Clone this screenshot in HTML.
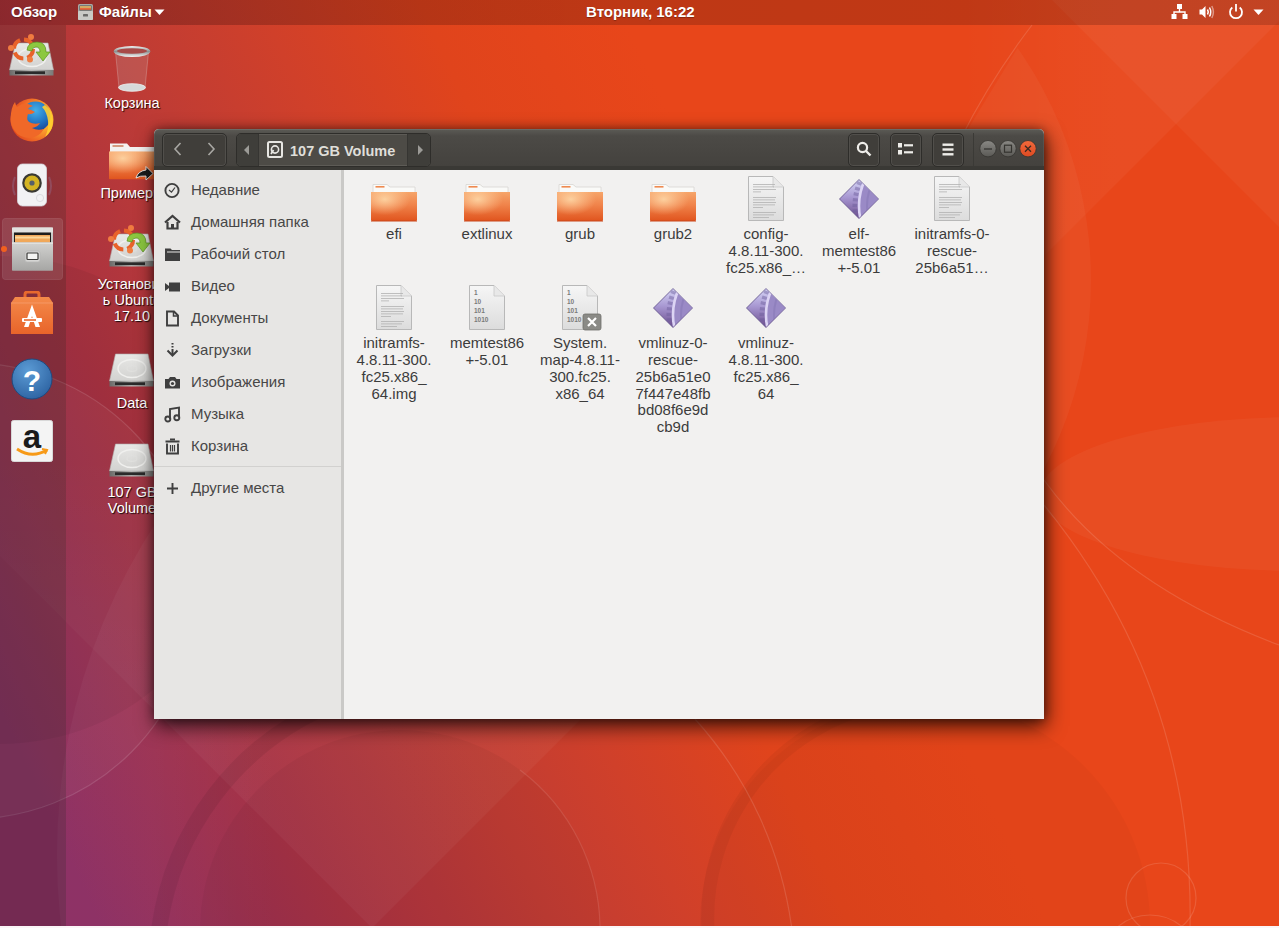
<!DOCTYPE html>
<html><head><meta charset="utf-8">
<style>
*{margin:0;padding:0;box-sizing:border-box}
html,body{width:1279px;height:928px;overflow:hidden;background:#fbf6f8}
body{position:relative;font-family:"Liberation Sans",sans-serif}
.abs{position:absolute}
#bg{position:absolute;left:0;top:0;width:1279px;height:926px;overflow:hidden}
#topbar{position:absolute;left:0;top:0;width:1279px;height:25px;background:linear-gradient(90deg,rgba(30,0,0,0.26),rgba(30,0,0,0.21) 40%,rgba(30,0,0,0.19));color:#fff;font-weight:bold;font-size:15px}
#topbar .t{position:absolute;top:3px;white-space:nowrap;text-shadow:0 1px 1px rgba(0,0,0,0.3)}
#dock{position:absolute;left:0;top:25px;width:66px;height:901px;background:rgba(30,40,30,0.2)}
.dicon{position:absolute}
.dlabel{position:absolute;width:90px;text-align:center;color:#fff;font-size:14.5px;line-height:16px;text-shadow:1px 1px 1px rgba(0,0,0,0.85)}
#win{position:absolute;left:154px;top:129px;width:890px;height:590px;background:#f2f1f0;border-radius:5px 5px 0 0;box-shadow:2px 7px 20px rgba(0,0,0,0.75),0 0 10px rgba(0,0,0,0.35)}
#hdr{position:absolute;left:0;top:0;width:890px;height:41px;background:linear-gradient(#5c5b56,#4c4a46 7px,#44423e);border-radius:5px 5px 0 0;border-bottom:4px solid #3a3935;box-shadow:inset 0 1px 0 rgba(255,255,255,0.1),inset 1px 0 0 rgba(255,255,255,0.06),inset -1px 0 0 rgba(255,255,255,0.06)}
.hbtn{position:absolute;top:3.5px;height:34px;border:1px solid #2e2d2a;border-radius:5px;background:#403e3a;box-shadow:inset 0 0 0 1px rgba(255,255,255,0.09)}
#side{position:absolute;left:0;top:41px;width:187px;height:549px;background:#e7e6e4}
#divider{position:absolute;left:187px;top:41px;width:3px;height:549px;background:#cac9c7}
.si{position:absolute;left:0;width:187px;height:32px}
.si .ic{position:absolute;left:10px;top:8px;width:17px;height:17px}
.si .tx{position:absolute;left:37px;top:7px;font-size:15px;color:#474747;white-space:nowrap}
.item{position:absolute;width:93px;text-align:center}
.item .lab{position:absolute;left:0;width:93px;font-size:15px;line-height:16.7px;color:#3c3c3c;text-align:center;white-space:nowrap}
</style></head><body>
<div id="bg">
<svg width="1279" height="926" style="position:absolute;left:0;top:0">
<defs>
<linearGradient id="base" gradientUnits="userSpaceOnUse" x1="-272" y1="127" x2="525" y2="-245">
<stop offset="0" stop-color="#8a2b60"/>
<stop offset="0.257" stop-color="#a83242"/>
<stop offset="0.4625" stop-color="#c03c34"/>
<stop offset="0.607" stop-color="#d0402a"/>
<stop offset="0.772" stop-color="#e0441c"/>
<stop offset="0.977" stop-color="#e8461a"/>
</linearGradient>
</defs>
<rect width="1279" height="926" fill="url(#base)"/>
<g>
<defs>
 <linearGradient id="fadeV" gradientUnits="userSpaceOnUse" x1="0" y1="450" x2="0" y2="720"><stop offset="0" stop-color="#fff" stop-opacity="0"/><stop offset="1" stop-color="#fff" stop-opacity="0.04"/></linearGradient>
 <linearGradient id="fadeH" gradientUnits="userSpaceOnUse" x1="960" y1="0" x2="1120" y2="0"><stop offset="0" stop-color="#fff" stop-opacity="0"/><stop offset="1" stop-color="#fff" stop-opacity="0.04"/></linearGradient>
 </defs>
 <polygon points="372,928 -1000,-444 300,-1744 1672,-372" fill="url(#fadeV)"/>
 <polygon points="372,928 -1000,-444 300,-1744 1672,-372" fill="url(#fadeH)"/>
 <polygon points="1052,0 1279,227 1279,0" fill="#fff" fill-opacity="0.04"/>
 <clipPath id="s1clip"><polygon points="1047,0 1400,0 1400,926 480,926"/></clipPath>
 <circle cx="688" cy="280" r="403" fill="#fff" fill-opacity="0.04" clip-path="url(#s1clip)"/>
 <ellipse cx="1300" cy="494" rx="260" ry="77" fill="#fff" fill-opacity="0.04"/>
 <circle cx="925" cy="925" r="225" fill="#000" fill-opacity="0.025"/>
 <path d="M708 930 A218 218 0 0 1 880 705" fill="none" stroke="#000" stroke-opacity="0.045" stroke-width="13"/>
 <path d="M159 930 A285 285 0 0 1 330 705" fill="none" stroke="#000" stroke-opacity="0.07" stroke-width="16"/>
 <circle cx="400" cy="930" r="200" fill="#000" fill-opacity="0.04"/>
 <path d="M520 770 A200 200 0 0 1 600 930" fill="none" stroke="#fff" stroke-opacity="0.1" stroke-width="1.2"/>
 <circle cx="-30" cy="591" r="228" fill="#fff" fill-opacity="0.035"/>
 <circle cx="0" cy="500" r="244" fill="#000" fill-opacity="0.05"/>
 <defs><linearGradient id="fadeL" gradientUnits="userSpaceOnUse" x1="150" y1="0" x2="280" y2="0"><stop offset="0" stop-color="#fff" stop-opacity="0.035"/><stop offset="1" stop-color="#fff" stop-opacity="0"/></linearGradient></defs>
 <circle cx="665" cy="855" r="608" fill="url(#fadeL)"/>
 <g fill="none" stroke="#fff" stroke-opacity="0.13" stroke-width="1.2">
  <circle cx="-30" cy="591" r="228"/>
  <path d="M695 719 A389 389 0 0 1 792 930"/>
  <path d="M1032 25 Q990 80 960 140"/>
  <path d="M1044 480 Q1120 585 1279 645"/>
  <path d="M1044 505 Q1195 690 1190 930"/>
  <circle cx="1161" cy="898" r="35"/>
  <circle cx="1150" cy="965" r="50"/>
 </g>
</g>
</svg>
</div>
<div id="topbar">
<div class="t" style="left:11px">Обзор</div>
<svg class="abs" style="left:77px;top:3px" width="17" height="18" viewBox="0 0 17 18">
 <rect x="1" y="1" width="15" height="16" rx="1.5" fill="#a9aaa6"/>
 <rect x="2.5" y="2.5" width="12" height="5" fill="#4a4a48"/>
 <rect x="3" y="3.2" width="11" height="1.6" fill="#f5c26a"/>
 <rect x="3" y="5" width="11" height="1.8" fill="#e86a3c"/>
 <rect x="1" y="8" width="15" height="9" rx="1" fill="#c9cac6"/>
 <rect x="6" y="11" width="5" height="2.6" rx="0.6" fill="#6a6a68"/>
</svg>
<div class="t" style="left:99px">Файлы</div>
<svg class="abs" style="left:154px;top:9px" width="11" height="7"><path d="M0.5 0.5 L10.5 0.5 L5.5 6 Z" fill="#fff"/></svg>
<div class="t" style="left:586px">Вторник, 16:22</div>
<svg class="abs" style="left:1171px;top:4px" width="17" height="16" viewBox="0 0 17 16">
 <rect x="6" y="0" width="5" height="5" fill="#fff"/>
 <path d="M8.5 5 V8 M3 11 V8 H14 V11" stroke="#fff" stroke-width="1.4" fill="none"/>
 <rect x="0.5" y="10" width="5" height="5" fill="#fff"/>
 <rect x="11.5" y="10" width="5" height="5" fill="#fff"/>
</svg>
<svg class="abs" style="left:1199px;top:4px" width="16" height="16" viewBox="0 0 16 16">
 <path d="M0.5 5.5 H3 L6.5 2 V14 L3 10.5 H0.5 Z" fill="#fff"/>
 <path d="M8.5 5.5 Q10 8 8.5 10.5" stroke="#fff" stroke-width="1.5" fill="none"/>
 <path d="M10.5 3.5 Q13 8 10.5 12.5" stroke="#fff" stroke-width="1.5" fill="none"/>
 <path d="M12.8 2 Q16 8 12.8 14" stroke="rgba(255,255,255,0.45)" stroke-width="1.5" fill="none"/>
</svg>
<svg class="abs" style="left:1228px;top:3px" width="16" height="17" viewBox="0 0 16 17">
 <path d="M4.3 4.5 A6 6 0 1 0 11.7 4.5" stroke="#fff" stroke-width="1.8" fill="none"/>
 <path d="M8 1 V8.5" stroke="#fff" stroke-width="1.8"/>
</svg>
<svg class="abs" style="left:1253px;top:9px" width="11" height="7"><path d="M0.5 0.5 L10.5 0.5 L5.5 6 Z" fill="#fff"/></svg>

</div>
<div id="dock">
<svg width="0" height="0" style="position:absolute"><defs><linearGradient id="drvtop" x1="0" y1="0" x2="0" y2="1"><stop offset="0" stop-color="#e8e8e6"/><stop offset="1" stop-color="#d2d2d0"/></linearGradient>
<linearGradient id="drvfront" x1="0" y1="0" x2="1" y2="0"><stop offset="0" stop-color="#6a6a68"/><stop offset="0.5" stop-color="#b8b8b6"/><stop offset="1" stop-color="#7a7a78"/></linearGradient>
<radialGradient id="ffblue" cx="0.55" cy="0.4" r="0.6"><stop offset="0" stop-color="#3a9ad8"/><stop offset="1" stop-color="#1d3f8c"/></radialGradient>
<linearGradient id="ffor" x1="0" y1="0" x2="1" y2="1"><stop offset="0" stop-color="#ffcf3a"/><stop offset="0.5" stop-color="#f2702a"/><stop offset="1" stop-color="#d43a22"/></linearGradient>
<linearGradient id="cab" x1="0" y1="0" x2="0" y2="1"><stop offset="0" stop-color="#d6d6d4"/><stop offset="1" stop-color="#9c9d9a"/></linearGradient>
<linearGradient id="bag" x1="0" y1="0" x2="0" y2="1"><stop offset="0" stop-color="#f48a4a"/><stop offset="1" stop-color="#e8642a"/></linearGradient>
<radialGradient id="help" cx="0.4" cy="0.3" r="0.8"><stop offset="0" stop-color="#5b9bd5"/><stop offset="1" stop-color="#2a5f9e"/></radialGradient>
</defs></svg>
<!-- install ubuntu -->
<svg class="dicon" style="left:8px;top:17px;overflow:visible" width="48" height="36" viewBox="0 0 48 36">
 <path d="M7.5 1 H40 L45.5 28 H1.5 Z" fill="url(#drvtop)" stroke="#b0b0ae" stroke-width="0.6"/>
 <ellipse cx="24" cy="15.5" rx="14" ry="9" fill="none" stroke="#f0f0ee" stroke-width="1.4"/>
 <ellipse cx="24" cy="15.5" rx="5" ry="2.8" fill="none" stroke="#e0e0de" stroke-width="1.2"/>
 <rect x="1.5" y="28" width="44" height="5.5" fill="url(#drvfront)"/>
 <rect x="7" y="29.3" width="30" height="2.8" fill="#2a2a2a"/>
 <g transform="translate(0,0)">
 <circle cx="15.5" cy="7" r="9.5" fill="none" stroke="#e8622a" stroke-width="4" stroke-dasharray="11 4"/>
 <circle cx="3" cy="6" r="3" fill="#f07c40"/><circle cx="23" cy="-5" r="3" fill="#f07c40"/><circle cx="22" cy="17.5" r="3" fill="#f07c40"/>
 <path d="M19 8 Q20 0 29 0 Q38 0 38 10 L42 10 L35 19 L28 10 L32 10 Q32 5 28 5 Q24 5 24 9 Z" fill="#8cc840" stroke="#5a9020" stroke-width="0.7"/>
</g>
</svg>
<!-- firefox -->
<svg class="dicon" style="left:9px;top:72px" width="46" height="46" viewBox="0 0 46 46">
 <defs>
  <radialGradient id="ffo2" cx="0.75" cy="0.45" r="0.75"><stop offset="0" stop-color="#ffe040"/><stop offset="0.35" stop-color="#fba42c"/><stop offset="0.7" stop-color="#f06a26"/><stop offset="1" stop-color="#e0461c"/></radialGradient>
  <radialGradient id="ffb2" cx="0.5" cy="0.3" r="0.75"><stop offset="0" stop-color="#44b0e8"/><stop offset="0.6" stop-color="#2070c0"/><stop offset="1" stop-color="#1a3e90"/></radialGradient>
 </defs>
 <circle cx="23" cy="23" r="21.5" fill="url(#ffo2)"/>
 <circle cx="26.5" cy="19.5" r="15" fill="url(#ffb2)"/>
 <path d="M1.5 22 Q2 10 6 5 Q7 9 8 10 Q13 6 19 7 Q22 8 24 9 Q20 10 19 12 Q23 13 26 15 Q22 18 19 17 Q17 22 20 25 Q25 28 31 26 Q29 30 23 31 Q28 34 35 32 Q30 40 22 41 Q10 41 5 33 Q1.5 28 1.5 22 Z" fill="#f06828"/>
 <path d="M36 8 Q44 14 44 24 Q44 34 36 40 Q40 32 39 24 Q38 15 33 10 Z" fill="#ffcf30" opacity="0.9"/>
</svg>
<!-- rhythmbox -->
<svg class="dicon" style="left:8px;top:138px" width="48" height="46" viewBox="0 0 48 46">
 <path d="M7 14 Q3 23 7 32 M41 14 Q45 23 41 32" stroke="rgba(150,150,200,0.25)" stroke-width="2" fill="none"/>
 <rect x="9.5" y="1" width="29" height="42" rx="5" fill="#f2f2f4" stroke="#d4d4da" stroke-width="0.8"/>
 <circle cx="24" cy="20" r="9.8" fill="#3a3a34"/>
 <circle cx="24" cy="20" r="7.6" fill="#d4b422"/>
 <circle cx="24" cy="20" r="2.6" fill="#56606a"/>
 <circle cx="32" cy="35" r="3.6" fill="none" stroke="#dcdce0" stroke-width="1"/>
</svg>
<!-- files highlight -->
<div class="abs" style="left:2px;top:193px;width:61px;height:62px;border-radius:4px;background:rgba(255,255,255,0.1);box-shadow:inset 0 0 0 1px rgba(255,255,255,0.05)"></div>
<div class="abs" style="left:1px;top:221px;width:6px;height:6px;border-radius:3px;background:#f2601e"></div>
<svg class="dicon" style="left:11px;top:202px" width="43" height="44" viewBox="0 0 43 44">
 <defs><linearGradient id="cab2" x1="0" y1="0" x2="0" y2="1"><stop offset="0" stop-color="#d2d2d0"/><stop offset="1" stop-color="#a6a6a4"/></linearGradient></defs>
 <rect x="1" y="0.5" width="41" height="43" rx="1.5" fill="url(#cab2)"/>
 <rect x="1" y="0.5" width="41" height="5" fill="#e2e2e0"/>
 <rect x="3" y="5.5" width="37" height="10" fill="#1e1e1c"/>
 <rect x="4" y="8" width="35" height="7.5" fill="#f0a85a"/>
 <rect x="4" y="9.5" width="35" height="2" fill="#fbd79a"/>
 <rect x="1" y="15.5" width="41" height="28" fill="url(#cab2)"/>
 <rect x="1" y="15.5" width="41" height="1.2" fill="#e8e8e6"/>
 <rect x="14" y="24" width="15" height="11" rx="2" fill="#d6d6d4" stroke="#b8b8b6" stroke-width="0.8"/>
 <rect x="16" y="26" width="11" height="6.5" rx="0.8" fill="#f4f4f2" stroke="#3a3a38" stroke-width="1.2"/>
</svg>
<!-- software -->
<svg class="dicon" style="left:10px;top:266px" width="44" height="44" viewBox="0 0 44 44">
 <path d="M15 8 V3.5 Q15 1 17.5 1 H26.5 Q29 1 29 3.5 V8" stroke="#e8692e" stroke-width="3" fill="none"/>
 <path d="M5 6 H39 L43 12 V43 H1 V12 Z" fill="url(#bag)"/>
 <path d="M1 12 H43" stroke="#f6a070" stroke-width="0.8"/>
 <path d="M22 13.5 L14 36 H18.5 L22 25 L25.5 36 H30 Z" fill="#fff"/>
 <rect x="12" y="27" width="20" height="4" rx="1" fill="#fff"/>
 <rect x="14" y="28.2" width="12" height="1.6" fill="#e8692e"/>
</svg>
<!-- help -->
<svg class="dicon" style="left:11px;top:333px" width="42" height="42" viewBox="0 0 42 42">
 <circle cx="21" cy="21" r="20" fill="url(#help)" stroke="#1f4a80" stroke-width="1"/>
 <text x="21" y="33" text-anchor="middle" font-family="Liberation Sans" font-weight="bold" font-size="30" fill="#fff">?</text>
</svg>
<!-- amazon -->
<svg class="dicon" style="left:11px;top:395px" width="42" height="42" viewBox="0 0 42 42">
 <rect x="0.5" y="0.5" width="41" height="41" rx="2" fill="#f4f4f4" stroke="#d8d8d8"/>
 <text x="21" y="28" text-anchor="middle" font-family="Liberation Sans" font-weight="bold" font-size="33" fill="#1a1a1a">a</text>
 <path d="M6 29 Q21 39 36 30" stroke="#f79a18" stroke-width="2.8" fill="none"/>
 <path d="M31 29 L36 30 L34 34" stroke="#f79a18" stroke-width="2" fill="none"/>
</svg>

</div>
<!-- trash -->
<svg class="dicon" style="left:112px;top:45px" width="40" height="48" viewBox="0 0 40 48">
 <defs><linearGradient id="rim" x1="0" y1="0" x2="0" y2="1"><stop offset="0" stop-color="#f0f4f4"/><stop offset="0.5" stop-color="#8c9090"/><stop offset="1" stop-color="#f4f6f6"/></linearGradient></defs>
 <path d="M3.5 7 L7 43 Q20 47 33 43 L36.5 7 Z" fill="rgba(190,170,170,0.22)" stroke="rgba(230,220,220,0.35)" stroke-width="0.8"/>
 <ellipse cx="20" cy="42.5" rx="13.5" ry="3.8" fill="#d6dada" stroke="#eef0f0" stroke-width="0.8"/>
 <ellipse cx="20" cy="6.5" rx="18.3" ry="5.5" fill="url(#rim)"/>
 <ellipse cx="20" cy="6" rx="15" ry="2.8" fill="#a84a48"/>
</svg>
<div class="dlabel" style="left:87px;top:95px">Корзина</div>
<!-- examples folder -->
<svg class="dicon" style="left:109px;top:143px" width="46" height="40" viewBox="0 0 46 40">
 <path d="M1 0.5 H18 L21 4 H46 V10 H1 Z" fill="#f4f2f0"/>
 <rect x="3.5" y="2" width="11" height="2" fill="#d49a80"/>
 <path d="M0 8.4 H46 V35.5 Q46 36.3 45 36.3 H1 Q0 36.3 0 35.5 Z" fill="url(#fld)"/>
 <path d="M0 8.4 H46 V36.3 H0 Z" fill="url(#fldhl)"/>
 <path d="M27 35 Q29 28 37 27 V23.5 L44 30.5 L37 37 V33 Q31 32.5 27 35 Z" fill="#1c1c1c" stroke="#f0f0f0" stroke-width="0.9"/>
</svg>
<div class="dlabel" style="left:87px;top:185px">Примеры</div>
<svg class="dicon" style="left:108px;top:233px;overflow:visible" width="48" height="36" viewBox="0 0 48 36">
 <path d="M7.5 1 H40 L45.5 28 H1.5 Z" fill="url(#drvtop)" stroke="#b0b0ae" stroke-width="0.6"/>
 <ellipse cx="24" cy="15.5" rx="14" ry="9" fill="none" stroke="#f0f0ee" stroke-width="1.4"/>
 <ellipse cx="24" cy="15.5" rx="5" ry="2.8" fill="none" stroke="#e0e0de" stroke-width="1.2"/>
 <rect x="1.5" y="28" width="44" height="5.5" fill="url(#drvfront)"/>
 <rect x="7" y="29.3" width="30" height="2.8" fill="#2a2a2a"/>
 <g transform="translate(0,0)">
 <circle cx="15.5" cy="7" r="9.5" fill="none" stroke="#e8622a" stroke-width="4" stroke-dasharray="11 4"/>
 <circle cx="3" cy="6" r="3" fill="#f07c40"/><circle cx="23" cy="-5" r="3" fill="#f07c40"/><circle cx="22" cy="17.5" r="3" fill="#f07c40"/>
 <path d="M19 8 Q20 0 29 0 Q38 0 38 10 L42 10 L35 19 L28 10 L32 10 Q32 5 28 5 Q24 5 24 9 Z" fill="#8cc840" stroke="#5a9020" stroke-width="0.7"/>
</g>
</svg>
<div class="dlabel" style="left:87px;top:276px">Установит<br>ь Ubuntu<br>17.10</div>
<svg class="dicon" style="left:108px;top:353px;overflow:visible" width="48" height="36" viewBox="0 0 48 36">
 <path d="M7.5 1 H40 L45.5 28 H1.5 Z" fill="url(#drvtop)" stroke="#b0b0ae" stroke-width="0.6"/>
 <ellipse cx="24" cy="15.5" rx="14" ry="9" fill="none" stroke="#f0f0ee" stroke-width="1.4"/>
 <ellipse cx="24" cy="15.5" rx="5" ry="2.8" fill="none" stroke="#e0e0de" stroke-width="1.2"/>
 <rect x="1.5" y="28" width="44" height="5.5" fill="url(#drvfront)"/>
 <rect x="7" y="29.3" width="30" height="2.8" fill="#2a2a2a"/>
 
</svg>
<div class="dlabel" style="left:87px;top:395px">Data</div>
<svg class="dicon" style="left:108px;top:443px;overflow:visible" width="48" height="36" viewBox="0 0 48 36">
 <path d="M7.5 1 H40 L45.5 28 H1.5 Z" fill="url(#drvtop)" stroke="#b0b0ae" stroke-width="0.6"/>
 <ellipse cx="24" cy="15.5" rx="14" ry="9" fill="none" stroke="#f0f0ee" stroke-width="1.4"/>
 <ellipse cx="24" cy="15.5" rx="5" ry="2.8" fill="none" stroke="#e0e0de" stroke-width="1.2"/>
 <rect x="1.5" y="28" width="44" height="5.5" fill="url(#drvfront)"/>
 <rect x="7" y="29.3" width="30" height="2.8" fill="#2a2a2a"/>
 
</svg>
<div class="dlabel" style="left:87px;top:484px">107 GB<br>Volume</div>

<div id="win">
 <div id="hdr">
 <div class="hbtn" style="left:8px;width:65px"></div>
<svg class="abs" style="left:19px;top:13px" width="10" height="14"><path d="M7.5 1 L2 7 L7.5 13" stroke="#a8a7a3" stroke-width="1.6" fill="none"/></svg>
<svg class="abs" style="left:52px;top:13px" width="10" height="14"><path d="M2.5 1 L8 7 L2.5 13" stroke="#a8a7a3" stroke-width="1.6" fill="none"/></svg>
<div class="hbtn" style="left:82px;width:195px;background:#4d4b46"></div>
<div class="abs" style="left:83px;top:4.5px;width:22px;height:32px;background:#3f3e3a;border-radius:4px 0 0 4px;border-right:1px solid #363532"></div>
<div class="abs" style="left:253px;top:4.5px;width:23px;height:32px;background:#3f3e3a;border-radius:0 4px 4px 0;border-left:1px solid #363532"></div>
<svg class="abs" style="left:89px;top:15px" width="8" height="12"><path d="M6 1 L1 6 L6 11 Z" fill="#9c9b97"/></svg>
<svg class="abs" style="left:263px;top:15px" width="8" height="12"><path d="M1 1 L6 6 L1 11 Z" fill="#9c9b97"/></svg>
<svg class="abs" style="left:113px;top:12px" width="16" height="17" viewBox="0 0 16 17">
 <rect x="1" y="1" width="14" height="15" rx="1.5" fill="none" stroke="#e8e7e3" stroke-width="2"/>
 <circle cx="8" cy="8.5" r="3.6" fill="none" stroke="#e8e7e3" stroke-width="1.6"/>
 <path d="M6.5 9 L4 13" stroke="#e8e7e3" stroke-width="1.8"/>
</svg>
<div class="abs" style="left:136px;top:13.5px;font-size:14.5px;font-weight:bold;color:#dfded9;white-space:nowrap">107 GB Volume</div>
<div class="hbtn" style="left:694px;width:32px"></div>
<svg class="abs" style="left:702px;top:12px" width="17" height="17" viewBox="0 0 17 17"><circle cx="6.5" cy="6.5" r="4.6" stroke="#eeede9" stroke-width="2.2" fill="none"/><path d="M10 10 L14.5 14.5" stroke="#eeede9" stroke-width="2.4"/></svg>
<div class="hbtn" style="left:736px;width:32px"></div>
<svg class="abs" style="left:744px;top:14px" width="16" height="13" viewBox="0 0 16 13"><rect x="0" y="0" width="4" height="4.5" fill="#eeede9"/><rect x="0" y="7" width="4" height="4.5" fill="#eeede9"/><rect x="6" y="1.2" width="9" height="2.2" fill="#eeede9"/><rect x="6" y="8.2" width="9" height="2.2" fill="#eeede9"/></svg>
<div class="hbtn" style="left:778px;width:32px"></div>
<svg class="abs" style="left:788px;top:14px" width="12" height="13" viewBox="0 0 12 13"><rect x="0.5" y="0.5" width="11" height="2.4" fill="#eeede9"/><rect x="0.5" y="5.3" width="11" height="2.4" fill="#eeede9"/><rect x="0.5" y="10.1" width="11" height="2.4" fill="#eeede9"/></svg>
<div class="abs" style="left:819px;top:4px;width:1px;height:33px;background:#3b3a36"></div>
<svg class="abs" style="left:824px;top:10px" width="60" height="20" viewBox="0 0 60 20">
 <defs>
 <linearGradient id="wcg" x1="0" y1="0" x2="0" y2="1"><stop offset="0" stop-color="#8a8985"/><stop offset="1" stop-color="#5a5955"/></linearGradient>
 <linearGradient id="wcr" x1="0" y1="0" x2="0" y2="1"><stop offset="0" stop-color="#f26a3c"/><stop offset="1" stop-color="#dd4a22"/></linearGradient>
 </defs>
 <circle cx="10" cy="9.7" r="8.2" fill="url(#wcg)" stroke="#353430" stroke-width="0.8"/>
 <path d="M6 10 H14" stroke="#353430" stroke-width="1.3"/>
 <circle cx="30" cy="9.7" r="8.2" fill="url(#wcg)" stroke="#353430" stroke-width="0.8"/>
 <rect x="26.5" y="6.2" width="7" height="7" fill="none" stroke="#353430" stroke-width="1.2"/>
 <circle cx="50" cy="9.7" r="8.2" fill="url(#wcr)" stroke="#353430" stroke-width="0.8"/>
 <path d="M47 6.7 L53 12.7 M53 6.7 L47 12.7" stroke="#3a2a22" stroke-width="1.3"/>
</svg>

 </div>
 <div id="side">
 <div class="si" style="top:4px"><svg class="ic" viewBox="0 0 17 17"><circle cx="8" cy="8.5" r="6.6" fill="none" stroke="#3f3f3f" stroke-width="1.9"/><path d="M5 8 L7.5 10.2 L11 5.5" stroke="#3f3f3f" stroke-width="1.2" fill="none"/></svg><div class="tx">Недавние</div></div>
<div class="si" style="top:36px"><svg class="ic" viewBox="0 0 17 17"><path d="M1 8.5 L8.5 2 L16 8.5" stroke="#3f3f3f" stroke-width="2.2" fill="none"/><path d="M3.5 8 V14.5 H13.5 V8" stroke="#3f3f3f" stroke-width="2.2" fill="none"/><rect x="7" y="10" width="3" height="4.5" fill="#3f3f3f"/></svg><div class="tx">Домашняя папка</div></div>
<div class="si" style="top:68px"><svg class="ic" viewBox="0 0 17 17"><path d="M1 2.5 H6.5 L8 4 H16 V15 H1 Z" fill="#3f3f3f"/><path d="M3 6 H16" stroke="#e7e6e4" stroke-width="1"/></svg><div class="tx">Рабочий стол</div></div>
<div class="si" style="top:100px"><svg class="ic" viewBox="0 0 17 17"><rect x="5" y="4.5" width="11" height="9" fill="#3f3f3f"/><path d="M1 5 L5 8 V10 L1 13 Z" fill="#3f3f3f"/></svg><div class="tx">Видео</div></div>
<div class="si" style="top:132px"><svg class="ic" viewBox="0 0 17 17"><path d="M3 1.5 H10 L14 5.5 V15.5 H3 Z" fill="none" stroke="#3f3f3f" stroke-width="1.9"/><path d="M9.5 1.5 V6 H14" fill="none" stroke="#3f3f3f" stroke-width="1.5"/></svg><div class="tx">Документы</div></div>
<div class="si" style="top:164px"><svg class="ic" viewBox="0 0 17 17"><path d="M8.5 1 V2.5 M8.5 4 V5.5 M8.5 7 V13" stroke="#3f3f3f" stroke-width="2"/><path d="M3.5 8.5 L8.5 13.5 L13.5 8.5" stroke="#3f3f3f" stroke-width="2" fill="none"/></svg><div class="tx">Загрузки</div></div>
<div class="si" style="top:196px"><svg class="ic" viewBox="0 0 17 17"><path d="M1 5 H4.5 L6 3 H11 L12.5 5 H16 V14.5 H1 Z" fill="#3f3f3f"/><circle cx="8.5" cy="9.5" r="3" fill="#e7e6e4"/><circle cx="8.5" cy="9.5" r="1.6" fill="#3f3f3f"/></svg><div class="tx">Изображения</div></div>
<div class="si" style="top:228px"><svg class="ic" viewBox="0 0 17 17"><path d="M6 13 V3 L15 1.5 V11.5" stroke="#3f3f3f" stroke-width="1.9" fill="none"/><circle cx="3.8" cy="13" r="2.5" fill="none" stroke="#3f3f3f" stroke-width="1.9"/><circle cx="12.8" cy="11.8" r="2.5" fill="none" stroke="#3f3f3f" stroke-width="1.9"/></svg><div class="tx">Музыка</div></div>
<div class="si" style="top:260px"><svg class="ic" viewBox="0 0 17 17"><rect x="1.5" y="2.5" width="14" height="2" fill="#3f3f3f"/><rect x="6" y="0.5" width="5" height="2" fill="#3f3f3f"/><path d="M3 5.5 V15.5 H14 V5.5" stroke="#3f3f3f" stroke-width="1.9" fill="none"/><path d="M6.5 7 V13.5 M8.5 7 V13.5 M10.5 7 V13.5" stroke="#3f3f3f" stroke-width="1.2"/></svg><div class="tx">Корзина</div></div>
<div class="abs" style="left:0;top:296px;width:187px;height:1px;background:#d2d1cf"></div>
<div class="si" style="top:302px"><svg class="ic" viewBox="0 0 17 17"><path d="M8.5 3 V14 M3 8.5 H14" stroke="#3f3f3f" stroke-width="1.9"/></svg><div class="tx">Другие места</div></div>

 </div>
 <div id="divider"></div>
 <svg width="0" height="0" style="position:absolute"><defs>
<linearGradient id="fld" x1="0" y1="0" x2="0" y2="1"><stop offset="0" stop-color="#f6a56a"/><stop offset="0.45" stop-color="#f0834a"/><stop offset="1" stop-color="#e0541e"/></linearGradient>
<radialGradient id="fldhl" cx="0.3" cy="0.25" r="0.55"><stop offset="0" stop-color="#ffe0b0" stop-opacity="0.8"/><stop offset="1" stop-color="#ffd0a0" stop-opacity="0"/></radialGradient>
<linearGradient id="docg" x1="0" y1="0" x2="0" y2="1"><stop offset="0" stop-color="#f6f6f6"/><stop offset="1" stop-color="#dcdcdc"/></linearGradient>
<linearGradient id="dia" x1="0" y1="0" x2="0" y2="1"><stop offset="0" stop-color="#d6d6f6"/><stop offset="0.45" stop-color="#a898d2"/><stop offset="1" stop-color="#6a4c8c"/></linearGradient>
<clipPath id="diaclip"><path d="M21 2 L40 21 L21 40 L2 21 Z"/></clipPath>
</defs></svg><svg class="abs" style="left:217px;top:55px" width="46" height="38" viewBox="0 0 46 38">
 <path d="M2 0.5 H16 L19 3 H44 V10 H2 Z" fill="#fafaf8" stroke="#d8d6d2" stroke-width="0.8"/>
 <rect x="4.5" y="2" width="9" height="1.6" fill="#ef8a50"/>
 <path d="M0 8 H46 V35.5 Q46 37 44.5 37 H1.5 Q0 37 0 35.5 Z" fill="url(#fld)"/>
 <path d="M0 8 H46 V37 H0 Z" fill="url(#fldhl)"/>
 <path d="M0 37 H46" stroke="#c8461a" stroke-width="1"/>
</svg><svg class="abs" style="left:310px;top:55px" width="46" height="38" viewBox="0 0 46 38">
 <path d="M2 0.5 H16 L19 3 H44 V10 H2 Z" fill="#fafaf8" stroke="#d8d6d2" stroke-width="0.8"/>
 <rect x="4.5" y="2" width="9" height="1.6" fill="#ef8a50"/>
 <path d="M0 8 H46 V35.5 Q46 37 44.5 37 H1.5 Q0 37 0 35.5 Z" fill="url(#fld)"/>
 <path d="M0 8 H46 V37 H0 Z" fill="url(#fldhl)"/>
 <path d="M0 37 H46" stroke="#c8461a" stroke-width="1"/>
</svg><svg class="abs" style="left:403px;top:55px" width="46" height="38" viewBox="0 0 46 38">
 <path d="M2 0.5 H16 L19 3 H44 V10 H2 Z" fill="#fafaf8" stroke="#d8d6d2" stroke-width="0.8"/>
 <rect x="4.5" y="2" width="9" height="1.6" fill="#ef8a50"/>
 <path d="M0 8 H46 V35.5 Q46 37 44.5 37 H1.5 Q0 37 0 35.5 Z" fill="url(#fld)"/>
 <path d="M0 8 H46 V37 H0 Z" fill="url(#fldhl)"/>
 <path d="M0 37 H46" stroke="#c8461a" stroke-width="1"/>
</svg><svg class="abs" style="left:496px;top:55px" width="46" height="38" viewBox="0 0 46 38">
 <path d="M2 0.5 H16 L19 3 H44 V10 H2 Z" fill="#fafaf8" stroke="#d8d6d2" stroke-width="0.8"/>
 <rect x="4.5" y="2" width="9" height="1.6" fill="#ef8a50"/>
 <path d="M0 8 H46 V35.5 Q46 37 44.5 37 H1.5 Q0 37 0 35.5 Z" fill="url(#fld)"/>
 <path d="M0 8 H46 V37 H0 Z" fill="url(#fldhl)"/>
 <path d="M0 37 H46" stroke="#c8461a" stroke-width="1"/>
</svg><svg class="abs" style="left:594px;top:47px" width="36" height="45" viewBox="0 0 36 45">
 <path d="M0.5 0.5 H25 L35.5 11 V44.5 H0.5 Z" fill="url(#docg)" stroke="#b8b8b8" stroke-width="1"/>
 <path d="M25 0.5 V11 H35.5" fill="#e8e8e8" stroke="#c8c8c8" stroke-width="0.8"/>
 <rect x="5" y="8" width="22" height="0.8" fill="#b2b2b2"/><rect x="5" y="10.5" width="21" height="0.8" fill="#b2b2b2"/><rect x="5" y="13" width="23" height="0.8" fill="#b2b2b2"/><rect x="5" y="15.5" width="8" height="0.8" fill="#b2b2b2"/><rect x="5" y="21" width="23" height="0.8" fill="#b2b2b2"/><rect x="5" y="23.5" width="22" height="0.8" fill="#b2b2b2"/><rect x="5" y="26" width="23" height="0.8" fill="#b2b2b2"/><rect x="5" y="28.5" width="22" height="0.8" fill="#b2b2b2"/><rect x="5" y="31" width="10" height="0.8" fill="#b2b2b2"/><rect x="5" y="36" width="23" height="0.8" fill="#b2b2b2"/><rect x="5" y="38.5" width="21" height="0.8" fill="#b2b2b2"/><rect x="5" y="41" width="16" height="0.8" fill="#b2b2b2"/>
</svg><svg class="abs" style="left:684px;top:49px" width="42" height="42" viewBox="0 0 42 42">
 <path d="M21 1.5 L40.5 21 L21 40.5 L1.5 21 Z" fill="url(#dia)" stroke="#5e4e88" stroke-width="1" stroke-linejoin="round" stroke-opacity="0.8"/>
 <g clip-path="url(#diaclip)">
  <circle cx="78" cy="28" r="61" fill="none" stroke="#6a5a9a" stroke-opacity="0.45" stroke-width="5" stroke-dasharray="3.2 2.4"/>
  <circle cx="78" cy="28" r="57" fill="#9a8ac6" stroke="#dcd4f4" stroke-width="2.6"/>
  <circle cx="78" cy="28" r="49" fill="none" stroke="#8070b0" stroke-opacity="0.4" stroke-width="2"/>
 </g>
</svg><svg class="abs" style="left:780px;top:47px" width="36" height="45" viewBox="0 0 36 45">
 <path d="M0.5 0.5 H25 L35.5 11 V44.5 H0.5 Z" fill="url(#docg)" stroke="#b8b8b8" stroke-width="1"/>
 <path d="M25 0.5 V11 H35.5" fill="#e8e8e8" stroke="#c8c8c8" stroke-width="0.8"/>
 <rect x="5" y="8" width="22" height="0.8" fill="#b2b2b2"/><rect x="5" y="10.5" width="21" height="0.8" fill="#b2b2b2"/><rect x="5" y="13" width="23" height="0.8" fill="#b2b2b2"/><rect x="5" y="15.5" width="8" height="0.8" fill="#b2b2b2"/><rect x="5" y="21" width="23" height="0.8" fill="#b2b2b2"/><rect x="5" y="23.5" width="22" height="0.8" fill="#b2b2b2"/><rect x="5" y="26" width="23" height="0.8" fill="#b2b2b2"/><rect x="5" y="28.5" width="22" height="0.8" fill="#b2b2b2"/><rect x="5" y="31" width="10" height="0.8" fill="#b2b2b2"/><rect x="5" y="36" width="23" height="0.8" fill="#b2b2b2"/><rect x="5" y="38.5" width="21" height="0.8" fill="#b2b2b2"/><rect x="5" y="41" width="16" height="0.8" fill="#b2b2b2"/>
</svg><div class="item"><div class="lab" style="left:193.5px;top:97.4px">efi</div><div class="lab" style="left:286.5px;top:97.4px">extlinux</div><div class="lab" style="left:379.5px;top:97.4px">grub</div><div class="lab" style="left:472.5px;top:97.4px">grub2</div><div class="lab" style="left:565.5px;top:97.4px">config-<br>4.8.11-300.<br>fc25.x86_…</div><div class="lab" style="left:658.5px;top:97.4px">elf-<br>memtest86<br>+-5.01</div><div class="lab" style="left:751.5px;top:97.4px">initramfs-0-<br>rescue-<br>25b6a51…</div><svg class="abs" style="left:222px;top:156px" width="36" height="45" viewBox="0 0 36 45">
 <path d="M0.5 0.5 H25 L35.5 11 V44.5 H0.5 Z" fill="url(#docg)" stroke="#b8b8b8" stroke-width="1"/>
 <path d="M25 0.5 V11 H35.5" fill="#e8e8e8" stroke="#c8c8c8" stroke-width="0.8"/>
 <rect x="5" y="8" width="22" height="0.8" fill="#b2b2b2"/><rect x="5" y="10.5" width="21" height="0.8" fill="#b2b2b2"/><rect x="5" y="13" width="23" height="0.8" fill="#b2b2b2"/><rect x="5" y="15.5" width="8" height="0.8" fill="#b2b2b2"/><rect x="5" y="21" width="23" height="0.8" fill="#b2b2b2"/><rect x="5" y="23.5" width="22" height="0.8" fill="#b2b2b2"/><rect x="5" y="26" width="23" height="0.8" fill="#b2b2b2"/><rect x="5" y="28.5" width="22" height="0.8" fill="#b2b2b2"/><rect x="5" y="31" width="10" height="0.8" fill="#b2b2b2"/><rect x="5" y="36" width="23" height="0.8" fill="#b2b2b2"/><rect x="5" y="38.5" width="21" height="0.8" fill="#b2b2b2"/><rect x="5" y="41" width="16" height="0.8" fill="#b2b2b2"/>
</svg><svg class="abs" style="left:315px;top:156px" width="40" height="46" viewBox="0 0 40 46">
 <path d="M0.5 0.5 H25 L35.5 11 V44.5 H0.5 Z" fill="url(#docg)" stroke="#b8b8b8" stroke-width="1"/>
 <path d="M25 0.5 V11 H35.5" fill="#e8e8e8" stroke="#c8c8c8" stroke-width="0.8"/>
 <g font-family="Liberation Sans" font-weight="bold" font-size="6.5" fill="#7a7a7a">
 <text x="5" y="10">1</text><text x="5" y="19">10</text><text x="5" y="28">101</text><text x="5" y="37">1010</text></g>
 
</svg><svg class="abs" style="left:408px;top:156px" width="40" height="46" viewBox="0 0 40 46">
 <path d="M0.5 0.5 H25 L35.5 11 V44.5 H0.5 Z" fill="url(#docg)" stroke="#b8b8b8" stroke-width="1"/>
 <path d="M25 0.5 V11 H35.5" fill="#e8e8e8" stroke="#c8c8c8" stroke-width="0.8"/>
 <g font-family="Liberation Sans" font-weight="bold" font-size="6.5" fill="#7a7a7a">
 <text x="5" y="10">1</text><text x="5" y="19">10</text><text x="5" y="28">101</text><text x="5" y="37">1010</text></g>
 <rect x="21" y="29" width="18" height="16" rx="2" fill="#8a8a86" stroke="#6e6e6a" stroke-width="0.8"/><path d="M26 33 L34 41 M34 33 L26 41" stroke="#fff" stroke-width="2.2"/>
</svg><svg class="abs" style="left:498px;top:158px" width="42" height="42" viewBox="0 0 42 42">
 <path d="M21 1.5 L40.5 21 L21 40.5 L1.5 21 Z" fill="url(#dia)" stroke="#5e4e88" stroke-width="1" stroke-linejoin="round" stroke-opacity="0.8"/>
 <g clip-path="url(#diaclip)">
  <circle cx="78" cy="28" r="61" fill="none" stroke="#6a5a9a" stroke-opacity="0.45" stroke-width="5" stroke-dasharray="3.2 2.4"/>
  <circle cx="78" cy="28" r="57" fill="#9a8ac6" stroke="#dcd4f4" stroke-width="2.6"/>
  <circle cx="78" cy="28" r="49" fill="none" stroke="#8070b0" stroke-opacity="0.4" stroke-width="2"/>
 </g>
</svg><svg class="abs" style="left:591px;top:158px" width="42" height="42" viewBox="0 0 42 42">
 <path d="M21 1.5 L40.5 21 L21 40.5 L1.5 21 Z" fill="url(#dia)" stroke="#5e4e88" stroke-width="1" stroke-linejoin="round" stroke-opacity="0.8"/>
 <g clip-path="url(#diaclip)">
  <circle cx="78" cy="28" r="61" fill="none" stroke="#6a5a9a" stroke-opacity="0.45" stroke-width="5" stroke-dasharray="3.2 2.4"/>
  <circle cx="78" cy="28" r="57" fill="#9a8ac6" stroke="#dcd4f4" stroke-width="2.6"/>
  <circle cx="78" cy="28" r="49" fill="none" stroke="#8070b0" stroke-opacity="0.4" stroke-width="2"/>
 </g>
</svg><div class="lab" style="left:193.5px;top:206.4px">initramfs-<br>4.8.11-300.<br>fc25.x86_<br>64.img</div><div class="lab" style="left:286.5px;top:206.4px">memtest86<br>+-5.01</div><div class="lab" style="left:379.5px;top:206.4px">System.<br>map-4.8.11-<br>300.fc25.<br>x86_64</div><div class="lab" style="left:472.5px;top:206.4px">vmlinuz-0-<br>rescue-<br>25b6a51e0<br>7f447e48fb<br>bd08f6e9d<br>cb9d</div><div class="lab" style="left:565.5px;top:206.4px">vmlinuz-<br>4.8.11-300.<br>fc25.x86_<br>64</div></div>
</div>
</body></html>
